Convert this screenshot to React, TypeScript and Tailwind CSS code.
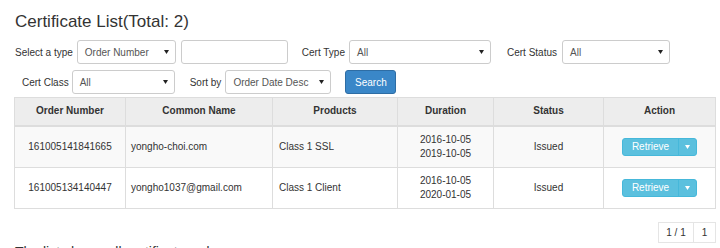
import React from "react";

const font = { fontFamily: '"Liberation Sans", Arial, sans-serif' };

function Caret({ color = "#222" }: { color?: string }) {
  return (
    <svg width="5" height="4" viewBox="0 0 5 4" className="shrink-0">
      <path d="M0 0 L5 0 L2.5 4 Z" fill={color} />
    </svg>
  );
}

function Select({ value, w }: { value: string; w: string }) {
  return (
    <div
      className={`${w} h-[24px] flex items-center justify-between pl-[7px] pr-[6px] border border-[#ccc] rounded-[3px] bg-white text-[10px] text-[#555] shrink-0`}
    >
      <span>{value}</span>
      <Caret />
    </div>
  );
}

function Retrieve() {
  return (
    <div className="inline-flex h-[18px] rounded-[3px] overflow-hidden border border-[#46b8da] bg-[#5bc0de] text-white text-[10px]">
      <div className="w-[55px] flex items-center justify-center">Retrieve</div>
      <div className="w-[18px] flex items-center justify-center border-l border-[#46b8da]">
        <Caret color="#fff" />
      </div>
    </div>
  );
}

const rows = [
  {
    order: "161005141841665",
    cn: "yongho-choi.com",
    prod: "Class 1 SSL",
    d1: "2016-10-05",
    d2: "2019-10-05",
    bg: "bg-[#f9f9f9]",
  },
  {
    order: "161005134140447",
    cn: "yongho1037@gmail.com",
    prod: "Class 1 Client",
    d1: "2016-10-05",
    d2: "2020-01-05",
    bg: "bg-white",
  },
];

export default function App() {
  return (
    <div className="w-[720px] h-[248px] overflow-hidden bg-white text-[#333]" style={font}>
      <div className="pt-[12px] pl-[15px] text-[17px] leading-[19px]">Certificate List(Total: 2)</div>

      <div className="mt-[9px] flex items-center pl-[15px] text-[10px]">
        <span>Select a type</span>
        <div className="ml-[4px]">
          <Select value="Order Number" w="w-[99px]" />
        </div>
        <div className="ml-[5px] w-[107px] h-[24px] border border-[#ccc] rounded-[3px] shrink-0" />
        <span className="ml-[14px]">Cert Type</span>
        <div className="ml-[4px]">
          <Select value="All" w="w-[142px]" />
        </div>
        <span className="ml-[16px]">Cert Status</span>
        <div className="ml-[5px]">
          <Select value="All" w="w-[108px]" />
        </div>
      </div>

      <div className="mt-[6px] flex items-center pl-[22px] text-[10px]">
        <span>Cert Class</span>
        <div className="ml-[3px]">
          <Select value="All" w="w-[103px]" />
        </div>
        <span className="ml-[15px]">Sort by</span>
        <div className="ml-[4px]">
          <Select value="Order Date Desc" w="w-[106px]" />
        </div>
        <div className="ml-[14px] w-[51px] h-[24px] rounded-[3px] bg-[#3a87c8] border border-[#2e6da4] text-white flex items-center justify-center">
          Search
        </div>
      </div>

      <table className="mt-[3px] ml-[14px] w-[701px] table-fixed border-collapse text-[10px]">
        <colgroup>
          <col className="w-[111px]" />
          <col className="w-[147px]" />
          <col className="w-[125px]" />
          <col className="w-[96px]" />
          <col className="w-[110px]" />
          <col className="w-[112px]" />
        </colgroup>
        <thead>
          <tr className="bg-[#ededed] h-[28px]">
            {["Order Number", "Common Name", "Products", "Duration", "Status", "Action"].map((h) => (
              <th key={h} className="border border-[#ddd] border-b-2 font-bold text-center leading-[14px] p-0">
                {h}
              </th>
            ))}
          </tr>
        </thead>
        <tbody>
          {rows.map((r) => (
            <tr key={r.order} className={`${r.bg} h-[41px]`}>
              <td className="border border-[#ddd] text-center leading-[14px] py-[6px]">{r.order}</td>
              <td className="border border-[#ddd] pl-[5px] leading-[14px]">{r.cn}</td>
              <td className="border border-[#ddd] pl-[6px] leading-[14px]">{r.prod}</td>
              <td className="border border-[#ddd] text-center leading-[14px] py-[6px]">
                <div>{r.d1}</div>
                <div>{r.d2}</div>
              </td>
              <td className="border border-[#ddd] text-center leading-[14px]">Issued</td>
              <td className="border border-[#ddd] text-center leading-[14px]">
                <Retrieve />
              </td>
            </tr>
          ))}
        </tbody>
      </table>

      <div className="mt-[13px] flex justify-end pr-[4px] text-[10px]">
        <div className="h-[21px] w-[36px] border border-[#e5e5e5] flex items-center justify-center">1 / 1</div>
        <div className="h-[21px] w-[22px] border border-l-0 border-[#e5e5e5] flex items-center justify-center">1</div>
      </div>

      <div className="pl-[15px] mt-[1px] text-[14px] leading-[16px]">The list shows all certificate orders</div>
    </div>
  );
}
